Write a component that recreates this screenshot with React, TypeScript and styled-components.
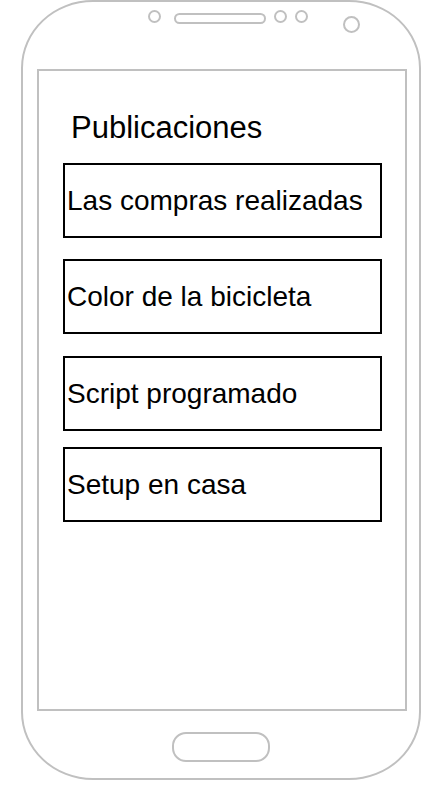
import * as React from "react";
import styled, { createGlobalStyle } from "styled-components";

const GlobalStyle = createGlobalStyle`
  html, body {
    margin: 0;
    padding: 0;
    background: #ffffff;
  }
  body {
    font-family: "Liberation Sans", Arial, Helvetica, sans-serif;
    color: #000000;
  }
`;

const FRAME = "#c0c0c0";

const Phone = styled.div`
  box-sizing: border-box;
  width: 400px;
  height: 780px;
  margin-left: 21px;
  border: 2px solid ${FRAME};
  border-radius: 72px / 68px;
  display: flex;
  flex-direction: column;
`;

const SensorBar = styled.div`
  height: 67px;
  display: flex;
  flex-direction: row;
  align-items: flex-start;
`;

const Dot = styled.div<{ size: number; top: number; left: number }>`
  box-sizing: border-box;
  width: ${p => p.size}px;
  height: ${p => p.size}px;
  margin-top: ${p => p.top}px;
  margin-left: ${p => p.left}px;
  border: 2px solid ${FRAME};
  border-radius: 50%;
  flex-shrink: 0;
`;

const Speaker = styled.div`
  box-sizing: border-box;
  width: 92px;
  height: 11px;
  margin-top: 11px;
  margin-left: 13px;
  border: 2px solid ${FRAME};
  border-radius: 6px;
  flex-shrink: 0;
`;

const Screen = styled.div`
  box-sizing: border-box;
  width: 370px;
  height: 642px;
  margin-left: 14px;
  border: 2px solid ${FRAME};
  padding: 41px 0 0 24px;
  display: flex;
  flex-direction: column;
`;

const Title = styled.div`
  font-size: 31px;
  line-height: 31px;
  margin-left: 8px;
  margin-bottom: 20px;
`;

const PostBox = styled.div<{ spaceAbove: number }>`
  box-sizing: border-box;
  width: 319px;
  height: 75px;
  margin-top: ${p => p.spaceAbove}px;
  border: 2px solid #000000;
  padding-left: 2px;
  display: flex;
  align-items: center;
  font-size: 28px;
  white-space: nowrap;
`;

const HomeButton = styled.div`
  box-sizing: border-box;
  width: 98px;
  height: 30px;
  margin: 21px auto 0;
  border: 2px solid ${FRAME};
  border-radius: 14px;
`;

const posts = [
  { title: "Las compras realizadas", space: 0 },
  { title: "Color de la bicicleta", space: 21 },
  { title: "Script programado", space: 22 },
  { title: "Setup en casa", space: 16 },
];

export default function App() {
  return (
    <>
      <GlobalStyle />
      <Phone>
        <SensorBar>
          <Dot size={13} top={8} left={125} />
          <Speaker />
          <Dot size={13} top={8} left={8} />
          <Dot size={13} top={8} left={8} />
          <Dot size={17} top={14} left={35} />
        </SensorBar>
        <Screen>
          <Title>Publicaciones</Title>
          {posts.map(post => (
            <PostBox key={post.title} spaceAbove={post.space}>
              {post.title}
            </PostBox>
          ))}
        </Screen>
        <HomeButton />
      </Phone>
    </>
  );
}
